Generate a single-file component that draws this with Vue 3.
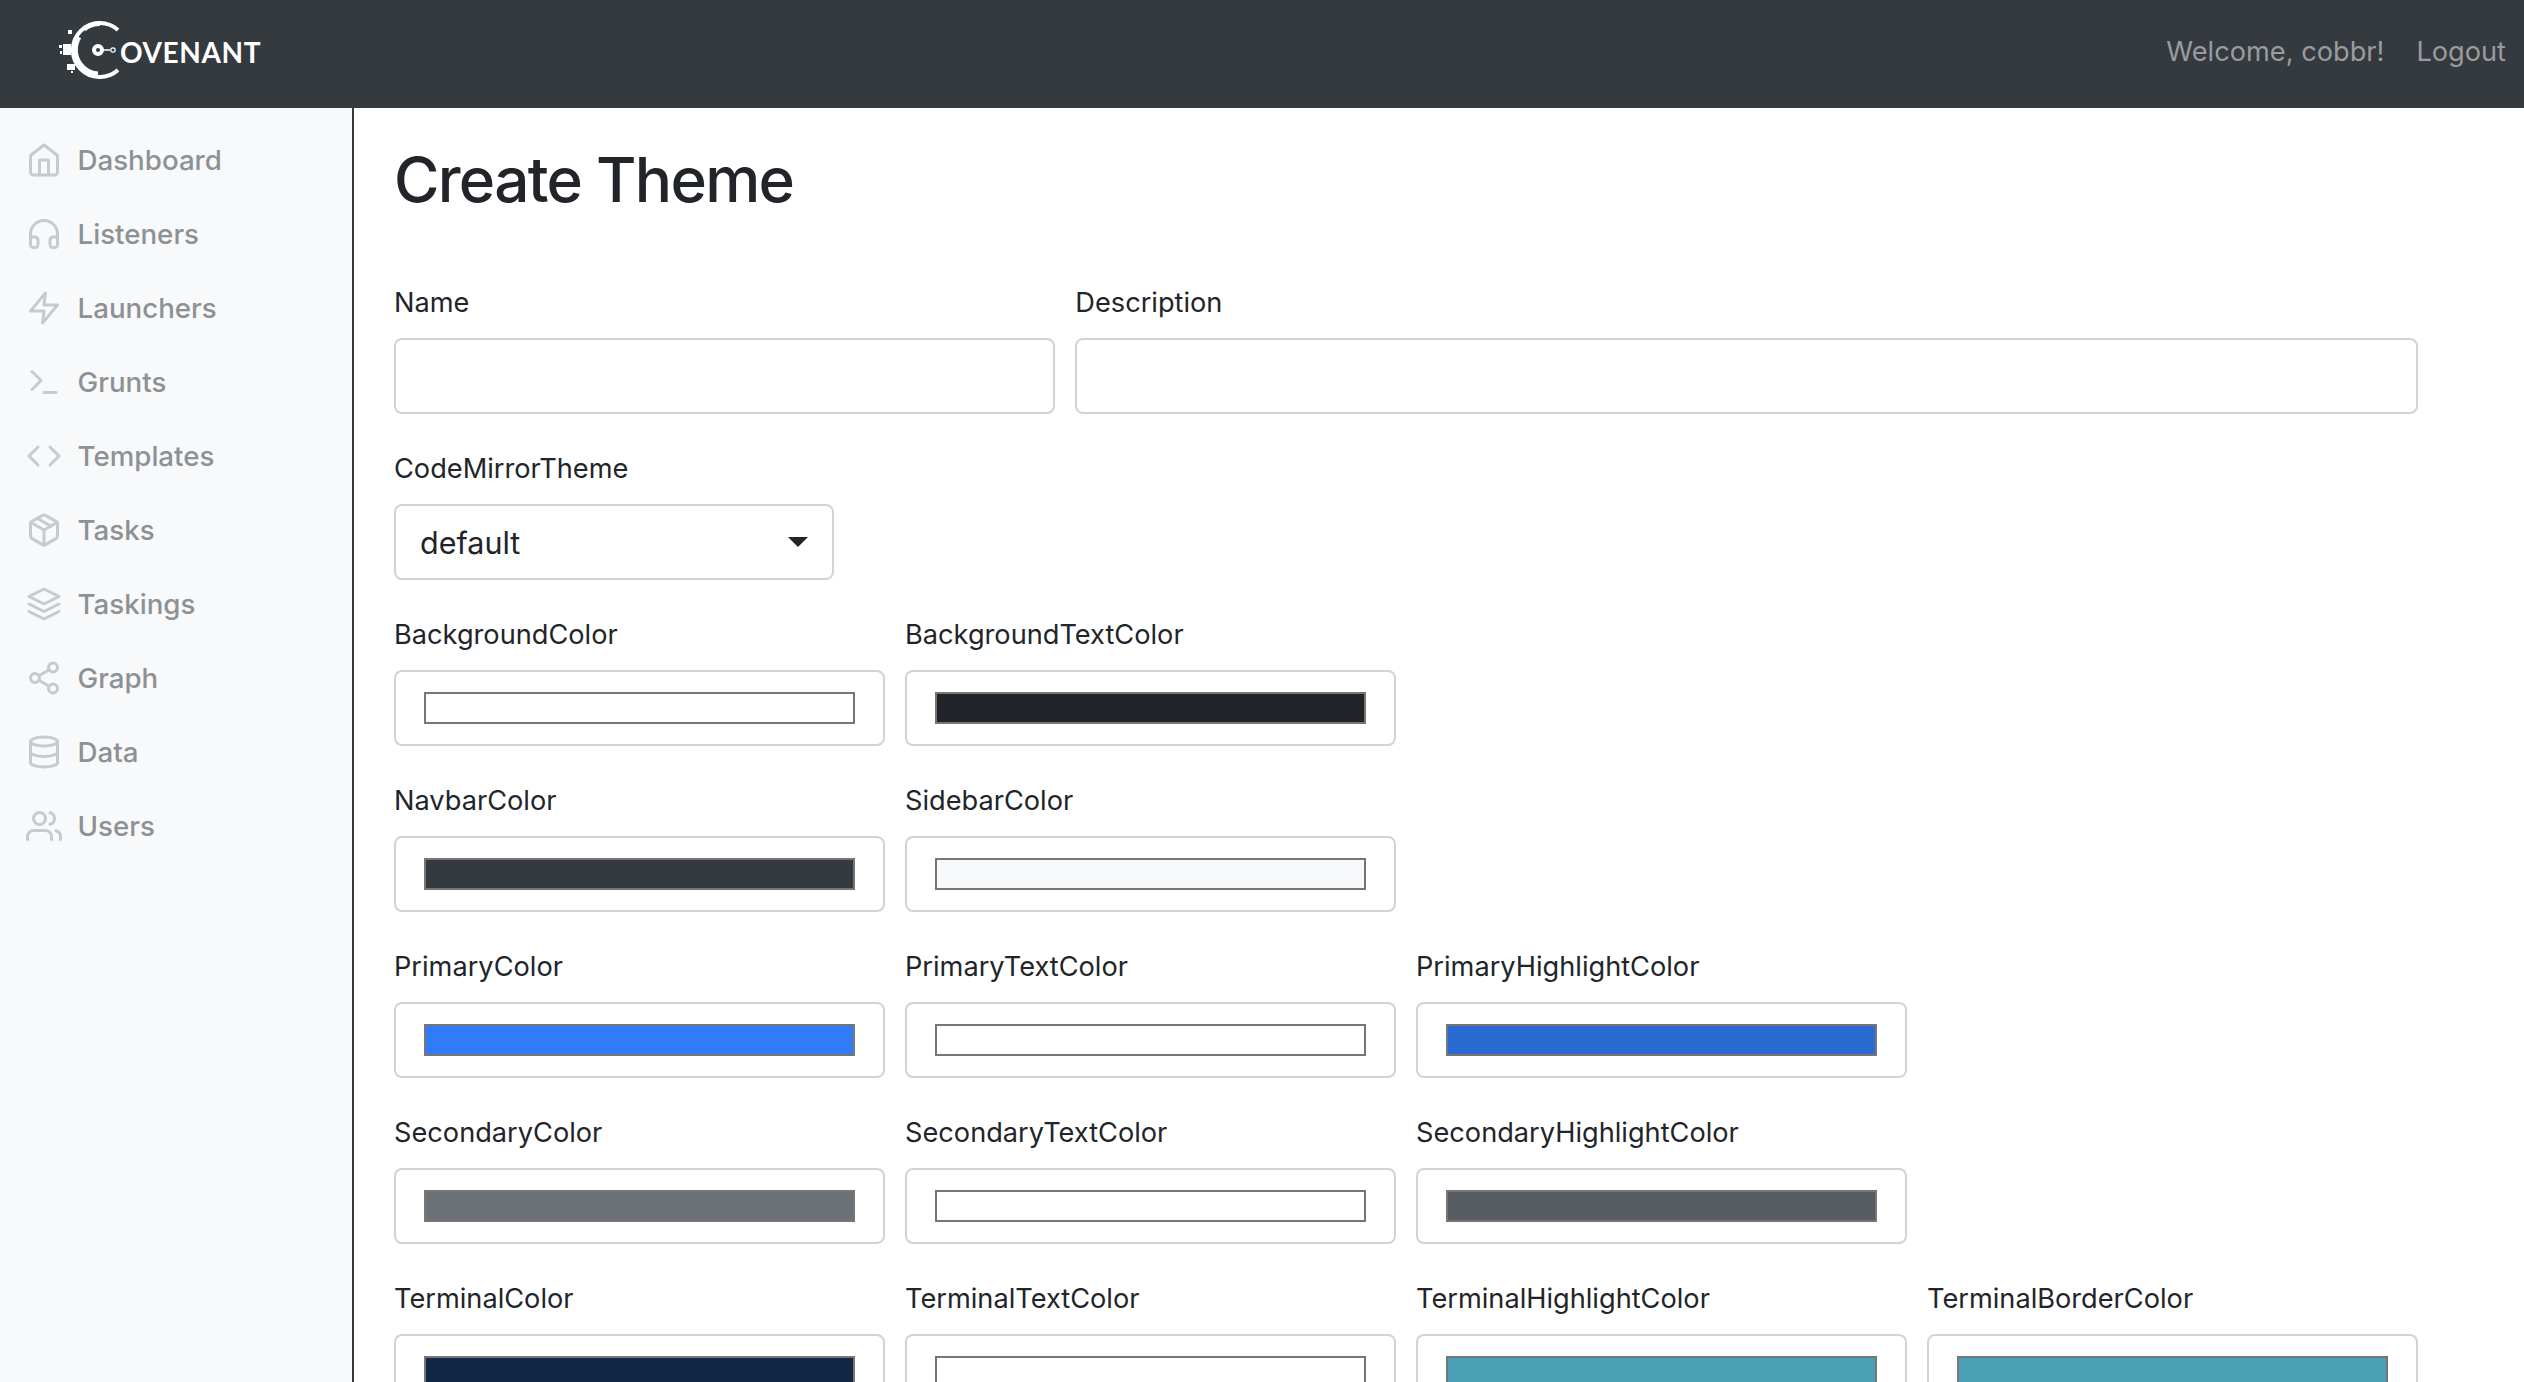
<template>
  <div class="page">
    <header class="navbar">
      <a class="brand">
        <svg class="logo-mark" width="70" height="62" viewBox="0 0 70 62">
          <g fill="none" stroke="#fff">
            <path d="M60 10A27 27 0 1 0 60 50" stroke-width="4" />
            <path d="M26 9A26 26 0 0 1 42 3.500" stroke-width="5" />
            <path d="M21 17A24 24 0 0 0 22 44A24 24 0 0 0 40 54" stroke-width="5" />
            <path d="M45 30H52" stroke-width="1.500" />
            <circle cx="55" cy="30" r="2.200" stroke-width="1.200" />
            <circle cx="40" cy="30" r="4" stroke-width="4" />
          </g>
          <rect x="5" y="24" width="8" height="11" fill="#fff" />
          <rect x="1" y="25" width="3" height="3" fill="#fff" />
          <rect x="2" y="31" width="2" height="3" fill="#fff" />
          <rect x="10" y="10" width="4" height="4" fill="#fff" />
          <rect x="9" y="44" width="8" height="6" fill="#fff" />
          <rect x="13" y="51" width="2" height="2" fill="#fff" />
        </svg>
        <span class="brand-text">OVENANT</span>
      </a>
      <div class="nav-right">
        <span>Welcome, cobbr!</span>
        <span>Logout</span>
      </div>
    </header>

    <div class="body-row">
      <aside class="sidebar">
        <a v-for="item in menu" :key="item.label" class="nav-link">
          <svg width="36" height="36" viewBox="0 0 24 24" fill="none" stroke="currentColor" stroke-width="2" stroke-linecap="round" stroke-linejoin="round" v-html="item.icon"></svg>
          <span>{{ item.label }}</span>
        </a>
      </aside>

      <main class="content">
        <h1>Create Theme</h1>

        <div class="row">
          <div class="field col-4">
            <label>Name</label>
            <div class="control"></div>
          </div>
          <div class="field col-8">
            <label>Description</label>
            <div class="control"></div>
          </div>
        </div>

        <div class="field select-field">
          <label>CodeMirrorTheme</label>
          <div class="control select">
            <span>default</span>
            <i class="caret"></i>
          </div>
        </div>

        <div v-for="(row, r) in colorRows" :key="r" class="row">
          <div v-for="c in row" :key="c.name" class="field col-3">
            <label>{{ c.name }}</label>
            <div class="control color">
              <div class="swatch" :style="{ background: c.value }"></div>
            </div>
          </div>
        </div>
      </main>
    </div>
  </div>
</template>

<script setup>
const menu = [
  { label: 'Dashboard', icon: '<path d="M3 9l9-7 9 7v11a2 2 0 0 1-2 2H5a2 2 0 0 1-2-2z"/><polyline points="9 22 9 12 15 12 15 22"/>' },
  { label: 'Listeners', icon: '<path d="M3 18v-6a9 9 0 0 1 18 0v6"/><path d="M21 19a2 2 0 0 1-2 2h-1a2 2 0 0 1-2-2v-3a2 2 0 0 1 2-2h3zM3 19a2 2 0 0 0 2 2h1a2 2 0 0 0 2-2v-3a2 2 0 0 0-2-2H3z"/>' },
  { label: 'Launchers', icon: '<polygon points="13 2 3 14 12 14 11 22 21 10 12 10 13 2"/>' },
  { label: 'Grunts', icon: '<polyline points="4 17 10 11 4 5"/><line x1="12" y1="19" x2="20" y2="19"/>' },
  { label: 'Templates', icon: '<polyline points="16 18 22 12 16 6"/><polyline points="8 6 2 12 8 18"/>' },
  { label: 'Tasks', icon: '<line x1="16.5" y1="9.4" x2="7.5" y2="4.21"/><path d="M21 16V8a2 2 0 0 0-1-1.730l-7-4a2 2 0 0 0-2 0l-7 4A2 2 0 0 0 3 8v8a2 2 0 0 0 1 1.730l7 4a2 2 0 0 0 2 0l7-4A2 2 0 0 0 21 16z"/><polyline points="3.27 6.96 12 12.01 20.73 6.96"/><line x1="12" y1="22.08" x2="12" y2="12"/>' },
  { label: 'Taskings', icon: '<polygon points="12 2 2 7 12 12 22 7 12 2"/><polyline points="2 17 12 22 22 17"/><polyline points="2 12 12 17 22 12"/>' },
  { label: 'Graph', icon: '<circle cx="18" cy="5" r="3"/><circle cx="6" cy="12" r="3"/><circle cx="18" cy="19" r="3"/><line x1="8.59" y1="13.51" x2="15.42" y2="17.49"/><line x1="15.41" y1="6.51" x2="8.59" y2="10.49"/>' },
  { label: 'Data', icon: '<ellipse cx="12" cy="5" rx="9" ry="3"/><path d="M21 12c0 1.660-4 3-9 3s-9-1.340-9-3"/><path d="M3 5v14c0 1.660 4 3 9 3s9-1.340 9-3V5"/>' },
  { label: 'Users', icon: '<path d="M17 21v-2a4 4 0 0 0-4-4H5a4 4 0 0 0-4 4v2"/><circle cx="9" cy="7" r="4"/><path d="M23 21v-2a4 4 0 0 0-3-3.870"/><path d="M16 3.130a4 4 0 0 1 0 7.750"/>' },
]

const colorRows = [
  [
    { name: 'BackgroundColor', value: '#ffffff' },
    { name: 'BackgroundTextColor', value: '#212529' },
  ],
  [
    { name: 'NavbarColor', value: '#343a40' },
    { name: 'SidebarColor', value: '#f8f9fa' },
  ],
  [
    { name: 'PrimaryColor', value: '#2f7cf6' },
    { name: 'PrimaryTextColor', value: '#ffffff' },
    { name: 'PrimaryHighlightColor', value: '#296bd3' },
  ],
  [
    { name: 'SecondaryColor', value: '#6c7178' },
    { name: 'SecondaryTextColor', value: '#ffffff' },
    { name: 'SecondaryHighlightColor', value: '#585c63' },
  ],
  [
    { name: 'TerminalColor', value: '#122744' },
    { name: 'TerminalTextColor', value: '#ffffff' },
    { name: 'TerminalHighlightColor', value: '#499fb4' },
    { name: 'TerminalBorderColor', value: '#499fb4' },
  ],
]
</script>

<style scoped>
.page {
  height: 1382px;
  overflow: hidden;
  display: flex;
  flex-direction: column;
  font-family: Inter, "Liberation Sans", sans-serif;
  color: #212529;
  background: #fff;
}

.navbar {
  height: 108px;
  flex: none;
  box-sizing: border-box;
  background: #353a3f;
  display: flex;
  align-items: center;
  justify-content: space-between;
  padding: 0 18px 6px 58px;
}

.brand {
  display: flex;
  align-items: center;
  color: #fff;
}

.brand-text {
  font-family: Lato, sans-serif;
  font-size: 28px;
  font-weight: 700;
  letter-spacing: 0.600px;
  margin-left: -8px;
  margin-top: 2px;
}

.nav-right {
  display: flex;
  gap: 32px;
  font-size: 27.200px;
  color: #999c9f;
}

.body-row {
  flex: 1;
  display: flex;
  min-height: 0;
}

.sidebar {
  width: 354px;
  flex: none;
  box-sizing: border-box;
  background: #f8f9fa;
  border-right: 2px solid #343a40;
  padding-top: 15px;
}

.nav-link {
  height: 74px;
  display: flex;
  align-items: center;
  gap: 15.500px;
  padding-left: 26px;
  font-size: 27.700px;
  font-weight: 500;
  color: #8e9194;
}

.nav-link svg {
  color: #c8cacb;
  flex: none;
}

.content {
  flex: 1;
  min-width: 0;
  padding: 0 106px 0 40px;
}

h1 {
  margin: 0;
  padding-top: 35px;
  height: 158px;
  box-sizing: border-box;
  font-size: 62px;
  font-weight: 500;
  letter-spacing: -1.700px;
  line-height: 1.2;
}

.row {
  display: grid;
  grid-template-columns: repeat(12, 1fr);
  column-gap: 20px;
  height: 166px;
}

.col-3 { grid-column: span 3; }
.col-4 { grid-column: span 4; }
.col-8 { grid-column: span 8; }

.field {
  display: flex;
  flex-direction: column;
}

.select-field {
  width: 440px;
  height: 166px;
}

label {
  height: 38px;
  margin-top: 18px;
  margin-bottom: 16px;
  font-size: 27.200px;
  line-height: 38px;
}

.control {
  height: 76px;
  box-sizing: border-box;
  border: 2px solid #ced4da;
  border-radius: 8px;
  background: #fff;
}

.select {
  display: flex;
  align-items: center;
  justify-content: space-between;
  padding: 0 24px;
  font-size: 30.500px;
  color: #212529;
}

.caret {
  width: 0;
  height: 0;
  border-left: 10px solid transparent;
  border-right: 10px solid transparent;
  border-top: 10px solid #212529;
}

.color {
  padding: 20px 28px;
}

.swatch {
  height: 32px;
  box-sizing: border-box;
  border: 2px solid #767676;
}
</style>
